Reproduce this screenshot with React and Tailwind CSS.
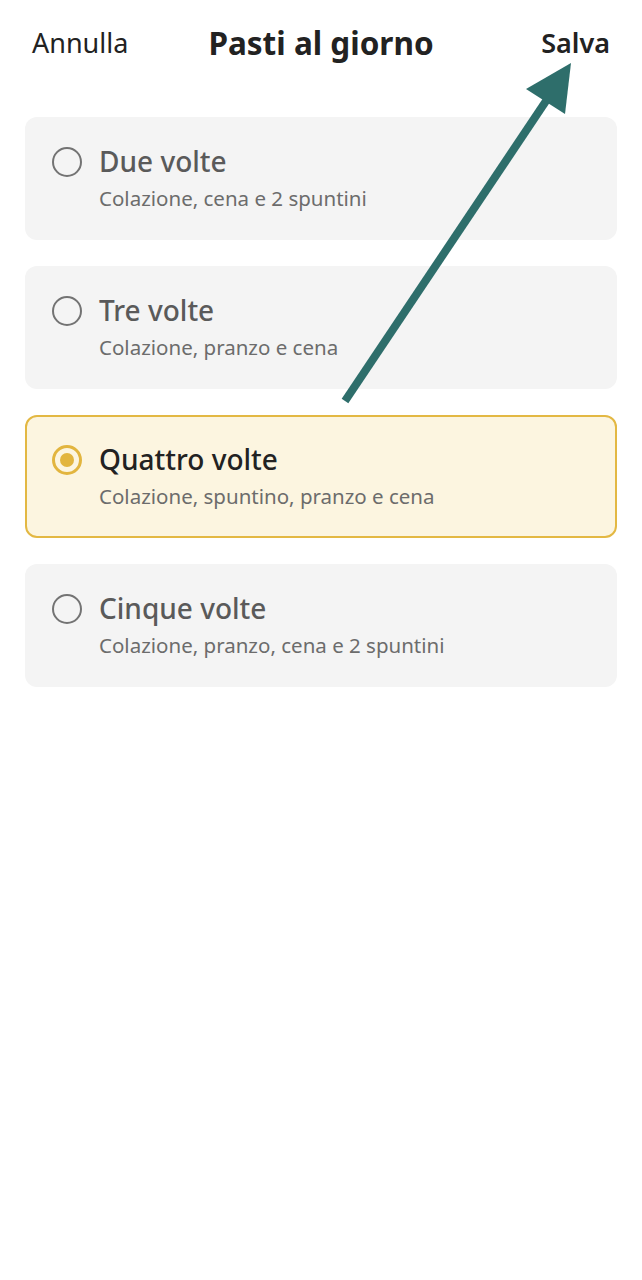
const OPTIONS = [
  { title: "Due volte", sub: "Colazione, cena e 2 spuntini" },
  { title: "Tre volte", sub: "Colazione, pranzo e cena" },
  { title: "Quattro volte", sub: "Colazione, spuntino, pranzo e cena", selected: true },
  { title: "Cinque volte", sub: "Colazione, pranzo, cena e 2 spuntini" },
];

function Radio({ selected }) {
  if (selected) {
    return (
      <span className="mt-[4px] flex h-[30px] w-[30px] shrink-0 items-center justify-center rounded-full border-[3px] border-[#e2b53f]">
        <span className="h-[14px] w-[14px] rounded-full bg-[#e2b53f]" />
      </span>
    );
  }
  return (
    <span className="mt-[4px] h-[30px] w-[30px] shrink-0 rounded-full border-[2.5px] border-[#737373]" />
  );
}

function OptionCard({ title, sub, selected }) {
  return (
    <div
      className={
        selected
          ? "flex h-[123px] gap-[17px] rounded-[12px] border-2 border-[#e3b843] bg-[#fcf5e0] px-[25px] pt-[24px]"
          : "flex h-[123px] gap-[17px] rounded-[12px] border-2 border-transparent bg-[#f4f4f4] px-[25px] pt-[24px]"
      }
    >
      <Radio selected={selected} />
      <div className="flex flex-col">
        <span
          className={
            selected
              ? "text-[28px] font-medium leading-[36px] text-[#222]"
              : "text-[28px] font-medium leading-[36px] text-[#5a5a5a]"
          }
        >
          {title}
        </span>
        <span className="mt-[6px] text-[20.5px] leading-[26px] text-[#6c6c6c]">{sub}</span>
      </div>
    </div>
  );
}

export default function App() {
  return (
    <div
      className="relative min-h-[1280px] w-full bg-white"
      style={{ fontFamily: '"Noto Sans", "Open Sans", sans-serif' }}
    >
      <header className="grid h-[88px] grid-cols-[1fr_auto_1fr] items-start px-[32px] pt-[23px]">
        <span className="justify-self-start text-[27px] leading-[40px] text-[#222]">Annulla</span>
        <span className="text-[31.5px] font-bold leading-[40px] text-[#222]">Pasti al giorno</span>
        <span className="justify-self-end text-[27px] font-semibold leading-[40px] text-[#222]">Salva</span>
      </header>

      <div className="flex flex-col gap-[26px] px-[25px] pt-[29px]">
        {OPTIONS.map((o) => (
          <OptionCard key={o.title} {...o} />
        ))}
      </div>

      <svg
        className="pointer-events-none absolute left-0 top-0"
        width="642"
        height="420"
        viewBox="0 0 642 420"
      >
        <line x1="345" y1="401" x2="548" y2="98" stroke="#2e6e6b" strokeWidth="8" />
        <polygon points="571,63 526,89 565,114" fill="#2e6e6b" />
      </svg>
    </div>
  );
}
